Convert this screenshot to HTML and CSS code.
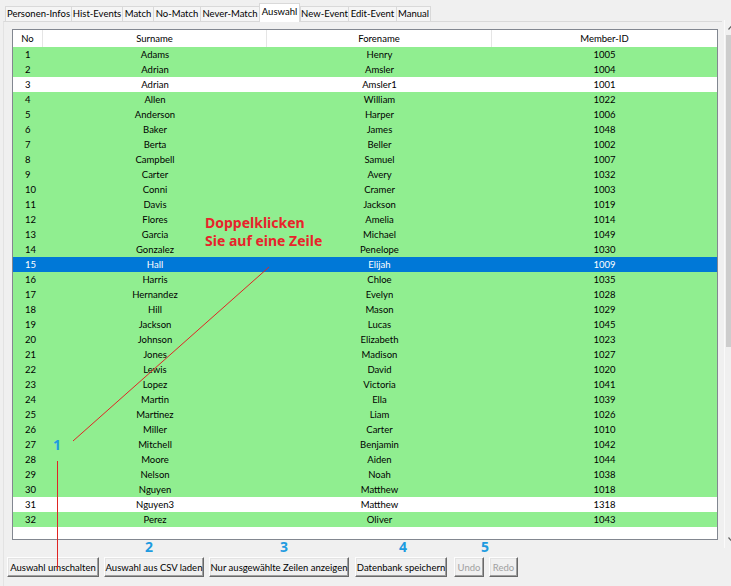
FILE: index.html
```html
<!DOCTYPE html>
<html>
<head>
<meta charset="utf-8">
<link rel="stylesheet" href="styles.css">
</head>
<body>
<div class="app">
  <div class="tabs">
    <div class="tab w71">Personen-Infos</div>
    <div class="tab w51">Hist-Events</div>
    <div class="tab w31">Match</div>
    <div class="tab w47">No-Match</div>
    <div class="tab w59">Never-Match</div>
    <div class="tab sel w41">Auswahl</div>
    <div class="tab w48">New-Event</div>
    <div class="tab w48">Edit-Event</div>
    <div class="tab w35">Manual</div>
  </div>
  <div class="panel">
    <div class="tablebox">
      <div class="thead">
        <div class="c no hc">No</div>
        <div class="c sn">Surname</div>
        <div class="c fn">Forename</div>
        <div class="c id">Member-ID</div>
      </div>
      <div class="tbody" id="tbody"></div>
    </div>
    <div class="buttons">
      <button class="btn b1">Auswahl umschalten</button>
      <button class="btn b2">Auswahl aus CSV laden</button>
      <button class="btn b3">Nur ausgewählte Zeilen anzeigen</button>
      <button class="btn b4">Datenbank speichern</button>
      <button class="btn b5 dis">Undo</button>
      <button class="btn b6 dis">Redo</button>
    </div>
  </div>
  <div class="scrollbar">
    <svg class="arrow up" width="7" height="5" viewBox="0 0 7 5"><path d="M0.5 4.5 L3.5 1 L6.5 4.5" fill="none" stroke="#606060" stroke-width="1.2"/></svg>
    <div class="thumb"></div>
    <svg class="arrow down" width="7" height="5" viewBox="0 0 7 5"><path d="M0.5 0.5 L3.5 4 L6.5 0.5" fill="none" stroke="#606060" stroke-width="1.2"/></svg>
  </div>
  <svg class="overlay" width="731" height="586" viewBox="0 0 731 586">
    <line x1="73" y1="441" x2="269" y2="267" stroke="#e02424" stroke-width="1"/>
    <rect x="57" y="461" width="1" height="108" fill="#e02424"/>
  </svg>
  <div class="note">Doppelklicken<br>Sie auf eine Zeile</div>
  <div class="num n1">1</div>
  <div class="num n2">2</div>
  <div class="num n3">3</div>
  <div class="num n4">4</div>
  <div class="num n5">5</div>
</div>
<script>
const rows = [
["Adams","Henry",1005,"g"],["Adrian","Amsler",1004,"g"],["Adrian","Amsler1",1001,"w"],
["Allen","William",1022,"g"],["Anderson","Harper",1006,"g"],["Baker","James",1048,"g"],
["Berta","Beller",1002,"g"],["Campbell","Samuel",1007,"g"],["Carter","Avery",1032,"g"],
["Conni","Cramer",1003,"g"],["Davis","Jackson",1019,"g"],["Flores","Amelia",1014,"g"],
["Garcia","Michael",1049,"g"],["Gonzalez","Penelope",1030,"g"],["Hall","Elijah",1009,"s"],
["Harris","Chloe",1035,"g"],["Hernandez","Evelyn",1028,"g"],["Hill","Mason",1029,"g"],
["Jackson","Lucas",1045,"g"],["Johnson","Elizabeth",1023,"g"],["Jones","Madison",1027,"g"],
["Lewis","David",1020,"g"],["Lopez","Victoria",1041,"g"],["Martin","Ella",1039,"g"],
["Martinez","Liam",1026,"g"],["Miller","Carter",1010,"g"],["Mitchell","Benjamin",1042,"g"],
["Moore","Aiden",1044,"g"],["Nelson","Noah",1038,"g"],["Nguyen","Matthew",1018,"g"],
["Nguyen3","Matthew",1318,"w"],["Perez","Oliver",1043,"g"]
];
const tb = document.getElementById("tbody");
rows.forEach((r,i)=>{
  const d = document.createElement("div");
  d.className = "row " + r[3];
  d.innerHTML = '<div class="c no">'+(i+1)+'</div><div class="c sn">'+r[0]+'</div><div class="c fn">'+r[1]+'</div><div class="c id">'+r[2]+'</div>';
  tb.appendChild(d);
});
</script>
</body>
</html>
```
FILE: styles.css
```css
html, body {
  margin: 0;
  padding: 0;
  background: #f0f0f0;
}
body {
  font-family: Lato, "Noto Sans", sans-serif;
  font-size: 9.5px;
  color: #000;
}
.app {
  position: relative;
  width: 731px;
  height: 586px;
  overflow: hidden;
}
.tabs {
  display: flex;
  align-items: flex-end;
  height: 21px;
  padding-left: 5px;
}
.tab {
  height: 15px;
  line-height: 14px;
  box-sizing: border-box;
  border: 1px solid #d9d9d9;
  border-bottom: none;
  border-right: none;
  background: #f5f5f5;
  text-align: center;
  white-space: nowrap;
  font-size: 9.5px;
}
.tab:nth-child(9) { border-right: 1px solid #d9d9d9; }
.tab.sel {
  height: 19px;
  background: #fff;
  line-height: 16px;
  margin-bottom: -1px;
  position: relative;
  border-right: 1px solid #d9d9d9;
}
.w71 { width: 66px; }
.w51 { width: 51px; }
.w31 { width: 31px; }
.w47 { width: 47px; }
.w59 { width: 59px; }
.w41 { width: 41px; }
.w48 { width: 48px; }
.w35 { width: 35px; }
.panel {
  margin-left: 3px;
  border-top: 1px solid #d9d9d9;
  border-left: 1px solid #e3e3e3;
  height: 565px;
  width: 719px;
  box-sizing: border-box;
  padding: 7px 0 0 8px;
}
.tablebox {
  width: 706px;
  height: 511px;
  box-sizing: border-box;
  border: 1px solid #828790;
  background: #fff;
}
.thead {
  display: flex;
  height: 17px;
  line-height: 17px;
  background: #fff;
}
.thead .c {
  border-right: 1px solid #e5e5e5;
  text-align: center;
  box-sizing: border-box;
}
.thead .c:last-child { border-right: none; }
.row {
  display: flex;
  height: 15px;
  line-height: 15px;
}
.row.g { background: #90ee90; }
.row.w { background: #fff; }
.row.s { background: #0078d7; color: #fff; }
.c {
  white-space: nowrap;
  overflow: hidden;
}
.no { width: 30px; box-sizing: border-box; padding-left: 12px; }
.thead .no.hc { padding-left: 0; text-align: center; }
.sn { width: 224px; text-align: center; }
.fn { width: 225px; text-align: center; }
.id { width: 225px; text-align: center; }
.buttons {
  display: flex;
  margin-top: 17px;
  margin-left: -5px;
  gap: 5px;
}
.btn {
  height: 20px;
  padding: 0;
  box-sizing: border-box;
  font-family: Lato, "Noto Sans", sans-serif;
  font-size: 9.5px;
  color: #000;
  background: #f0f0f0;
  border: 1px solid;
  border-color: #fdfdfd #696969 #696969 #fdfdfd;
  box-shadow: inset -1px -1px 0 #a0a0a0, inset 1px 1px 0 #e3e3e3;
  white-space: nowrap;
}
.b1 { width: 92px; }
.b2 { width: 100px; }
.b3 { width: 140px; }
.b4 { width: 92px; margin-left: 1px; }
.b5 { width: 30px; margin-left: 2px; }
.b6 { width: 29px; }
.btn.dis { color: #a0a0a0; }
.scrollbar {
  position: absolute;
  left: 724px;
  top: 20px;
  width: 17px;
  height: 528px;
  background: #f0f0f0;
  border-left: 1px solid #fafafa;
}
.thumb {
  position: absolute;
  left: 1px;
  top: 15px;
  width: 15px;
  height: 312px;
  background: #cdcdcd;
}
.arrow {
  position: absolute;
  left: 3px;
  display: block;
}
.arrow.up { top: 5px; }
.arrow.down { bottom: 6px; }
.overlay {
  position: absolute;
  left: 0;
  top: 0;
  pointer-events: none;
}
.note {
  position: absolute;
  left: 205px;
  top: 214px;
  font-family: "Noto Sans", sans-serif;
  font-weight: bold;
  font-size: 14px;
  line-height: 18px;
  color: #e8232b;
}
.num {
  position: absolute;
  font-family: "Noto Sans", sans-serif;
  font-weight: bold;
  font-size: 14px;
  line-height: 16px;
  color: #1e9be0;
}
.n1 { left: 53px; top: 437px; }
.n2 { left: 145px; top: 539px; }
.n3 { left: 280px; top: 539px; }
.n4 { left: 399px; top: 539px; }
.n5 { left: 481px; top: 539px; }
```
